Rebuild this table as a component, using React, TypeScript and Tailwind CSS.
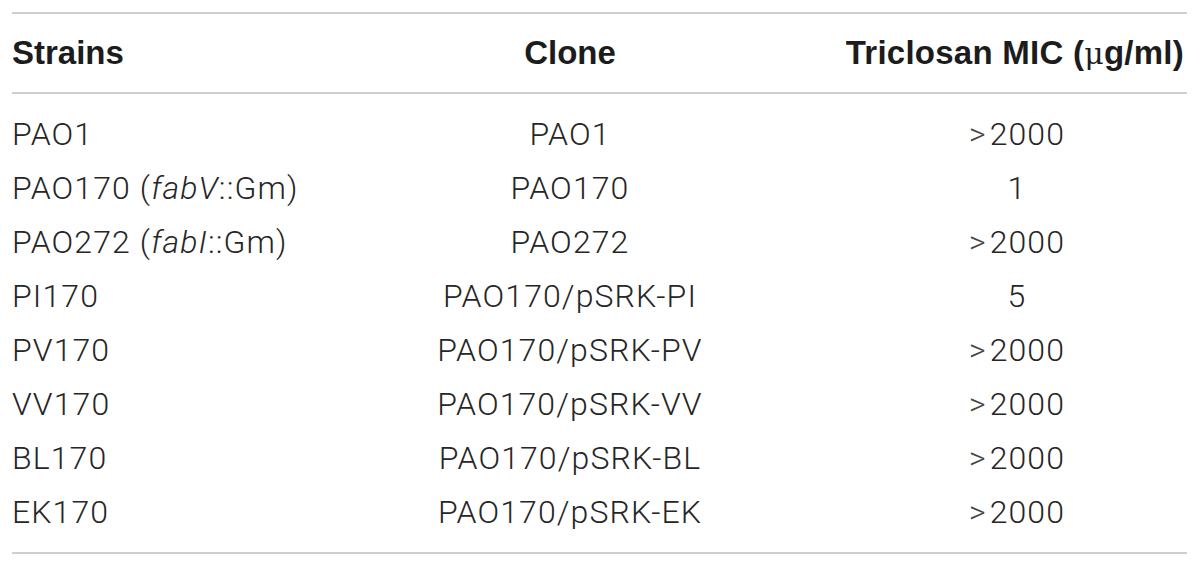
import React from 'react';

type Row = {
  strain: React.ReactNode;
  clone: string;
  mic: string;
};

const rows: Row[] = [
  { strain: 'PAO1', clone: 'PAO1', mic: '>2000' },
  {
    strain: (
      <>
        PAO170 (<i>fabV</i>::Gm)
      </>
    ),
    clone: 'PAO170',
    mic: '1',
  },
  {
    strain: (
      <>
        PAO272 (<i>fabI</i>::Gm)
      </>
    ),
    clone: 'PAO272',
    mic: '>2000',
  },
  { strain: 'PI170', clone: 'PAO170/pSRK-PI', mic: '5' },
  { strain: 'PV170', clone: 'PAO170/pSRK-PV', mic: '>2000' },
  { strain: 'VV170', clone: 'PAO170/pSRK-VV', mic: '>2000' },
  { strain: 'BL170', clone: 'PAO170/pSRK-BL', mic: '>2000' },
  { strain: 'EK170', clone: 'PAO170/pSRK-EK', mic: '>2000' },
];

function Mic({ value }: { value: string }) {
  // the ">" in the source is set a little apart and thinner
  if (value.startsWith('>')) {
    return (
      <span>
        <span className="mr-[3px] text-[#444]">&gt;</span>
        {value.slice(1)}
      </span>
    );
  }
  return <span>{value}</span>;
}

export default function App() {
  return (
    <div className="w-[1200px] h-[567px] bg-white px-[12px] pt-[12px] font-['Liberation_Sans',Arial,sans-serif] text-[#222]">
      <div className="border-t-2 border-b-2 border-[#cfcfcf] mr-[1px]">
        {/* header */}
        <div className="flex items-center h-[80px] border-b-2 border-[#cfcfcf] text-[33px] font-bold text-[#1c1c1c]">
          <div className="w-[388px]">Strains</div>
          <div className="w-[340px] text-center">Clone</div>
          <div className="flex-1 flex justify-end pr-[3px]">
            <div className="w-[340px] text-right whitespace-nowrap tracking-[0.25px]">
              Triclosan MIC (<span className="font-['DejaVu_Serif',serif] font-normal text-[30px]">μ</span>g/ml)
            </div>
          </div>
        </div>

        {/* body */}
        <div className="pt-[13px] pb-[13px] font-['Roboto',sans-serif] font-light text-[32px] tracking-[1.1px] text-[#262626]">
          {rows.map((r) => (
            <div key={r.clone + r.mic + String(r.strain)} className="flex items-center h-[54px]">
              <div className="w-[388px] whitespace-nowrap">{r.strain}</div>
              <div className="w-[340px] text-center whitespace-nowrap">{r.clone}</div>
              <div className="flex-1 flex justify-end">
                <div className="w-[340px] text-center">
                  <Mic value={r.mic} />
                </div>
              </div>
            </div>
          ))}
        </div>
      </div>
    </div>
  );
}
